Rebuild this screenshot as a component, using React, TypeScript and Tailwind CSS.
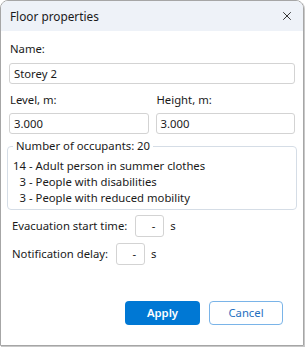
import { X } from 'lucide-react';

const OCCUPANTS = [
  { count: 14, label: 'Adult person in summer clothes' },
  { count: 3, label: 'People with disabilities' },
  { count: 3, label: 'People with reduced mobility' },
];

function TextBox({ value, className = '' }: { value: string; className?: string }) {
  return (
    <div
      className={`flex h-[21px] items-center rounded-[3px] border border-[#d3d3d3] bg-white px-[4px] text-[#1a1a1a] ${className}`}
    >
      {value}
    </div>
  );
}

function SecondsField({ label, className = '' }: { label: string; className?: string }) {
  return (
    <div className={`flex items-center pl-[3px] ${className}`}>
      <span>{label}</span>
      <div className="ml-[8px] flex h-[22px] w-[29px] items-center justify-end rounded-[3px] border border-[#d3d3d3] pr-[8px]">
        -
      </div>
      <span className="ml-[6px]">s</span>
    </div>
  );
}

export default function App() {
  return (
    <div className="h-[347px] w-[306px] bg-white font-['Noto_Sans',sans-serif]">
      <div className="flex h-[346px] w-[304px] flex-col overflow-hidden rounded-t-[8px] border border-[#a6a6a6] text-[11.3px] leading-[16px] text-[#1a1a1a] shadow-[1px_1px_0_#c8c8c8]">
        {/* Title bar */}
        <div className="flex h-[30px] items-center justify-between bg-[#eef2f8] pl-[9px] pr-[9px]">
          <span className="text-[11.8px]">Floor properties</span>
          <X className="h-[14px] w-[14px]" strokeWidth={1.5} />
        </div>

        <div className="flex flex-1 flex-col px-[8px]">
          <div className="mt-[10px] pl-[1px]">Name:</div>
          <TextBox value="Storey 2" className="mt-[6px]" />

          <div className="mt-[8px] flex gap-[7px]">
            <div className="flex flex-1 flex-col">
              <div className="pl-[1px]">Level, m:</div>
              <TextBox value="3.000" className="mt-[5px]" />
            </div>
            <div className="flex flex-1 flex-col">
              <div className="pl-[1px]">Height, m:</div>
              <TextBox value="3.000" className="mt-[5px]" />
            </div>
          </div>

          <fieldset className="mx-[-2px] mt-[4px] rounded-[4px] border border-[#d5dde6] pb-[3px] pl-[5px] pr-[5px]">
            <legend className="px-[3px]">Number of occupants: 20</legend>
            <div className="mt-[4px] flex flex-col">
              {OCCUPANTS.map((o) => (
                <div key={o.label} className="flex">
                  <span className="w-[13px] text-right">{o.count}</span>
                  <span className="ml-[3px]">- {o.label}</span>
                </div>
              ))}
            </div>
          </fieldset>

          <SecondsField label="Evacuation start time:" className="mt-[5px]" />
          <SecondsField label="Notification delay:" className="mt-[6px]" />

          <div className="mt-auto mb-[20px] flex justify-end gap-[9px] pr-[12px]">
            <button className="h-[24px] w-[75px] rounded-[4px] bg-[#0078d4] font-semibold text-white">Apply</button>
            <button className="h-[24px] w-[74px] rounded-[4px] border border-[#7ab4e8] bg-white text-[#1f6fbf]">
              Cancel
            </button>
          </div>
        </div>
      </div>
    </div>
  );
}
